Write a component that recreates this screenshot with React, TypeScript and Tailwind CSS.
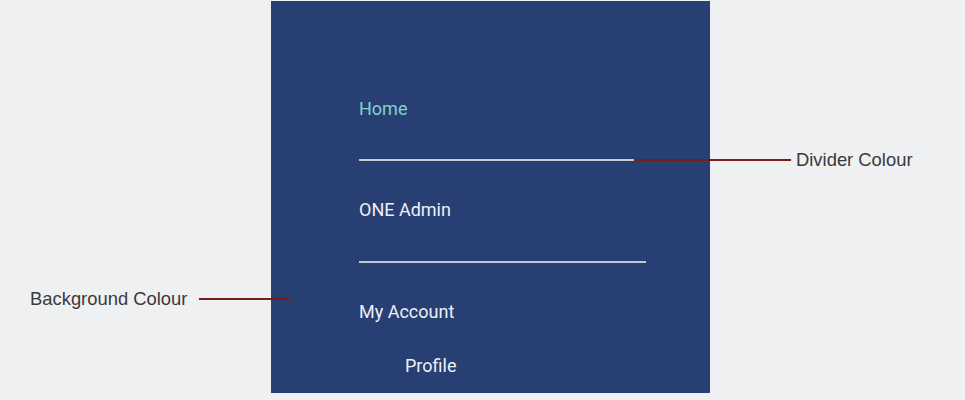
export default function App() {
  const item = "h-6 leading-6 text-[18px] font-['Roboto',sans-serif] text-[#eef0f5]";
  const divider = "h-[2px] w-[287px] bg-[#c3c8d1]";
  const note = "leading-6 text-[18.4px] font-['Liberation_Sans',sans-serif] text-[#3a3a3a]";

  return (
    <div className="relative w-[965px] h-[400px] bg-[#eff0f2] overflow-hidden pt-[1px] pl-[271px]">
      {/* Drawer panel */}
      <nav className="flex flex-col w-[439px] h-[392px] bg-[#283f73] pl-[88px] pt-[96px]">
        <div className={`${item} !text-[#80d4cf]`}>Home</div>
        <div className={`${divider} mt-[38px]`} />
        <div className={`${item} mt-[37px]`}>ONE Admin</div>
        <div className={`${divider} mt-[39px]`} />
        <div className={`${item} mt-[37px]`}>My Account</div>
        <div className={`${item} mt-[30px] pl-[46px]`}>Profile</div>
      </nav>

      {/* Annotations */}
      <div className="absolute left-[634px] top-[148px] flex items-center gap-[5px]">
        <div className="w-[157px] h-[2px] bg-[#7b1c1c]" />
        <span className={note}>Divider Colour</span>
      </div>
      <div className="absolute left-[30px] top-[287px] flex items-center gap-[12px]">
        <span className={note}>Background Colour</span>
        <div className="w-[93px] h-[2px] bg-[#7b1c1c]" />
      </div>
    </div>
  );
}
